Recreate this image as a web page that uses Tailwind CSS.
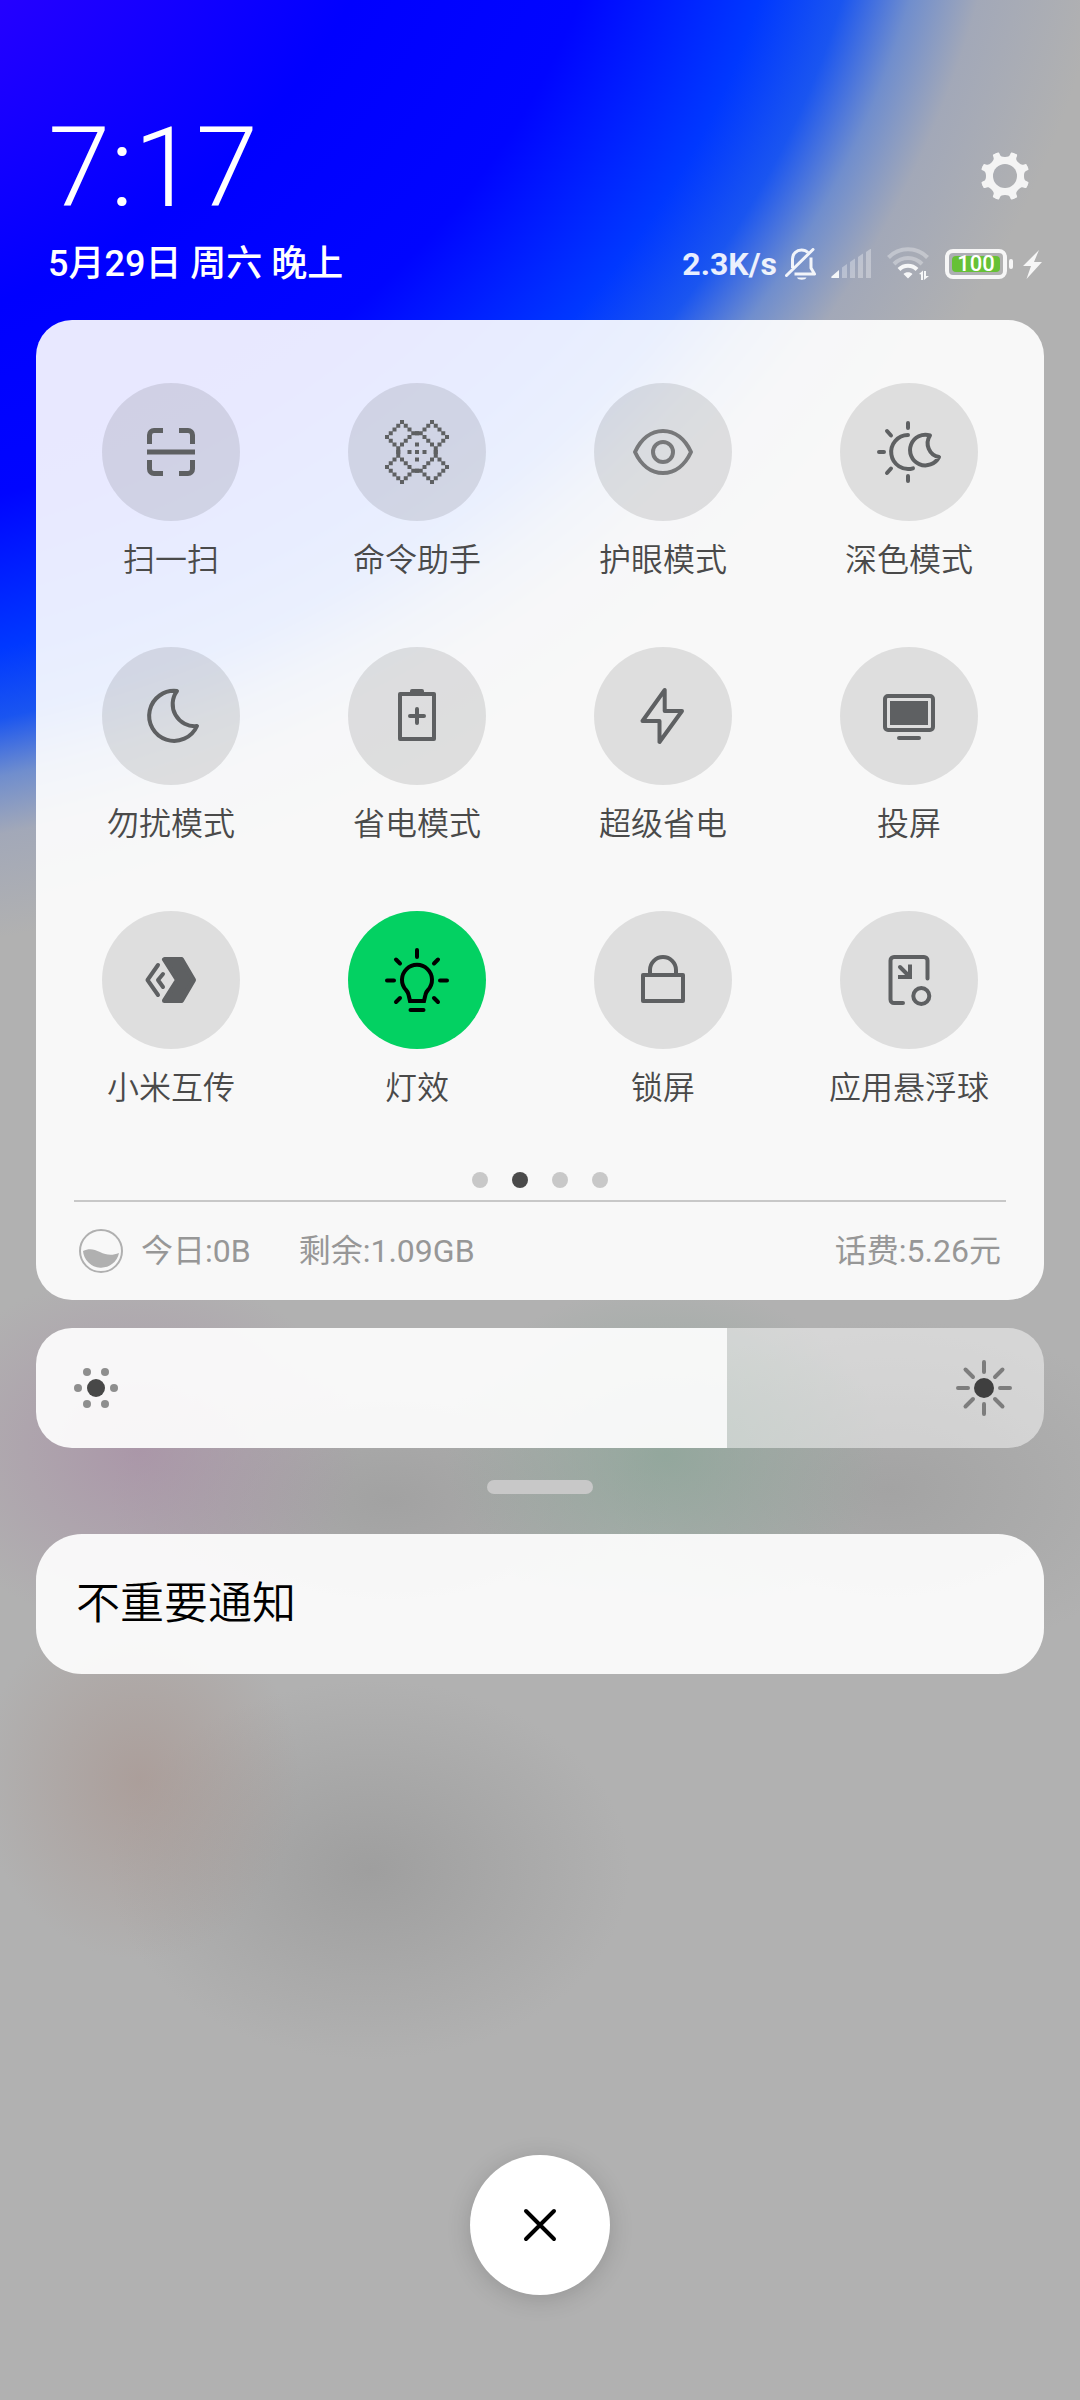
<!DOCTYPE html>
<html lang="zh-CN">
<head>
<meta charset="utf-8">
<meta name="viewport" content="width=device-width, initial-scale=1">
<title>控制中心</title>
<script src="https://cdn.jsdelivr.net/npm/@tailwindcss/browser@4"></script>
</head>
<body class="font-[Roboto,'Noto_Sans_CJK_SC',sans-serif]">
<div class="flex min-h-screen flex-col bg-[#b1b1b1] bg-[radial-gradient(1325px_1125px_at_-300px_-250px,#3a00f4_24%,#2400ff_32%,#0000ff_54%,#0005ff_70%,#0038ff_83%,#1a55f0_89%,rgba(90,130,215,0.75)_94%,rgba(140,155,195,0.4)_99%,rgba(176,176,176,0)_108%),radial-gradient(220px_180px_at_140px_1450px,rgba(168,140,165,0.7),rgba(168,140,165,0)),radial-gradient(220px_170px_at_665px_1455px,rgba(140,165,152,0.8),rgba(140,165,152,0)),radial-gradient(160px_180px_at_140px_1780px,rgba(168,148,142,0.65),rgba(168,148,142,0)),radial-gradient(260px_190px_at_370px_1870px,rgba(154,154,154,0.8),rgba(154,154,154,0)),radial-gradient(280px_150px_at_390px_1500px,rgba(158,158,158,0.8),rgba(158,158,158,0)),radial-gradient(280px_170px_at_890px_1490px,rgba(160,160,160,0.8),rgba(160,160,160,0))] bg-no-repeat pb-[105px]">

  <header class="pt-[108px] text-white">
    <div class="flex items-center justify-between pr-[51px] pl-12">
      <time class="text-[112px] leading-[120px] font-light">7:17</time>
      <button type="button" aria-label="设置" class="pt-4">
        <svg class="size-12" viewBox="-24 -24 48 48" aria-hidden="true">
          <defs>
            <path id="notch" d="M-7-26-6.400-23.500C-4.500-22-6-19 0-19S4.500-22 6.400-23.500L7-26z"/>
            <mask id="gear" maskUnits="userSpaceOnUse" x="-26" y="-26" width="52" height="52">
              <circle r="25" fill="#fff"/><circle r="12" fill="#000"/>
              <use href="#notch"/><use href="#notch" transform="rotate(45)"/><use href="#notch" transform="rotate(90)"/><use href="#notch" transform="rotate(135)"/><use href="#notch" transform="rotate(180)"/><use href="#notch" transform="rotate(225)"/><use href="#notch" transform="rotate(270)"/><use href="#notch" transform="rotate(315)"/>
            </mask>
          </defs>
          <circle r="24.500" fill="#f4f4f4" mask="url(#gear)"/>
        </svg>
      </button>
    </div>
    <div class="mt-3 flex h-12 items-center justify-between pr-[38px] pl-12">
      <p class="text-[36px] leading-12 font-medium">5月29日 周六 晚上</p>
      <div class="flex items-center text-white/90">
        <span class="text-[32px] leading-12 font-bold">2.3K/s</span>
        <svg class="ml-2 h-8 w-8" viewBox="0 0 32 32" fill="none" stroke="currentColor" stroke-width="3" role="img" aria-label="静音">
          <path d="M23 4.500C21 2.500 18.500 2 16.500 2 11.500 2 7.500 6 7.500 11v9M26 9.500V20l3.500 6H9.500" stroke-linejoin="round"/>
          <path d="M1.500 27.500 28 1.500" stroke-linecap="round"/><path d="M12 29.500h9.500c-1 3-8.500 3-9.500 0z" fill="currentColor" stroke="none"/>
        </svg>
        <svg class="ml-[14px] h-[30px] w-10" viewBox="0 0 40 30" fill="currentColor" role="img" aria-label="信号">
          <path d="M8 21v8H1c-1 0-1-1-.5-1.500z"/>
          <path opacity=".35" d="M11 18.500l5-3.500v14h-5zM19 13l5-3.500V29h-5zM27 8l5-3.500V29h-5zM35 3l5-3.500V29h-5z"/>
        </svg>
        <svg class="ml-4 h-[34px] w-[42px]" viewBox="0 0 42 34" role="img" aria-label="无线网络">
          <g fill="none" stroke="currentColor" stroke-width="4"><path opacity=".35" d="M1.500 10.500C12-.5 30-.5 40.500 10.500M7 17C15 9 27 9 35 17"/><path d="M12 22.500c5-5 13-5 18 0"/></g>
          <path fill="currentColor" d="M21 31.500l-4.500-4.500c2-2.500 7-2.500 9 0zM32 27l4-3.500V33h-2v-5.500zM37 24h2v5h3l-5 4z"/>
        </svg>
        <div class="ml-4 flex items-center">
          <div class="flex h-[30px] w-[62px] items-center rounded-lg border-4 border-[#f6f6f6] p-[3px]">
            <span class="flex h-4 flex-1 items-center justify-center rounded-sm bg-[#66c136] text-[22px] leading-4 font-medium text-white">100</span>
          </div>
          <span class="ml-[2px] h-[10px] w-1 rounded-sm bg-[#f6f6f6]"></span>
        </div>
        <svg class="ml-[10px] h-[30px] w-[19px]" viewBox="0 0 19 30" fill="#f6f6f6" role="img" aria-label="充电中"><path d="M16 1 0 17h8L3.500 30 19 13h-8z"/></svg>
      </div>
    </div>
  </header>

  <main class="mt-8 flex flex-1 flex-col px-9">
    <section class="rounded-[36px] bg-white/91 pt-[63px]" aria-label="快捷开关">
      <div class="grid grid-cols-4 gap-y-[63px] px-3 text-[32px] leading-12 font-[350] text-[#4a4a4a]">
        <button type="button" class="flex flex-col items-center gap-[15px]">
          <span class="flex size-[138px] items-center justify-center rounded-full bg-black/10"><svg class="size-[72px]" viewBox="0 0 72 72" fill="none" stroke="#5e6062" stroke-width="5" aria-hidden="true"><path d="M28 14.500H19A4.500 4.500 0 0 0 14.500 19V28M44 14.500h9a4.500 4.500 0 0 1 4.500 4.500V28M28 57.500H19a4.500 4.500 0 0 1-4.500-4.500V44M44 57.500h9a4.500 4.500 0 0 0 4.500-4.500V44M12 36h48"/></svg></span>
          <span>扫一扫</span>
        </button>
        <button type="button" class="flex flex-col items-center gap-[15px]">
          <span class="flex size-[138px] items-center justify-center rounded-full bg-black/10"><svg class="size-[72px]" viewBox="-9.600 -9.600 19.200 19.200" fill="none" stroke="#5e6062" stroke-width="1.070" stroke-linecap="square" aria-hidden="true">
            <defs><path id="arm" d="M-4-8h0M-5-7h0M-6-6h0M-7-5h0M-8-4h0M-3-7h0M-2-6h0M-7-3h0M-6-2h0M-2-4h0M-3-3h0M-4-2h0M-1-5H0M-5-1V0"/></defs>
            <use href="#arm"/><use href="#arm" transform="scale(-1 1)"/><use href="#arm" transform="scale(1 -1)"/><use href="#arm" transform="scale(-1 -1)"/>
            <path d="M0 0h0M-2 0h0M2 0h0M0-2h0M0 2h0"/></svg></span>
          <span>命令助手</span>
        </button>
        <button type="button" class="flex flex-col items-center gap-[15px]">
          <span class="flex size-[138px] items-center justify-center rounded-full bg-black/10"><svg class="size-[72px]" viewBox="0 0 72 72" fill="none" stroke="#77787a" stroke-width="4" stroke-linejoin="round" aria-hidden="true"><path d="M8 36C14 23 24 15 36 15S58 23 64 36C58 49 48 57 36 57S14 49 8 36z"/><circle cx="36" cy="36" r="10"/></svg></span>
          <span>护眼模式</span>
        </button>
        <button type="button" class="flex flex-col items-center gap-[15px]">
          <span class="flex size-[138px] items-center justify-center rounded-full bg-black/10"><svg class="size-[72px]" viewBox="0 0 72 72" fill="none" stroke="#5e6062" stroke-width="4" stroke-linecap="round" stroke-linejoin="round" aria-hidden="true"><path d="M35 19a17 17 0 1 0 5 33.300M57 19.500A15.300 15.300 0 1 0 66 41 14 14 0 0 1 57 19.500zM35 7v5M35 60v5M6 36h5M14 15l4 4.500M14 57l4-4.500"/></svg></span>
          <span>深色模式</span>
        </button>
        <button type="button" class="flex flex-col items-center gap-[15px]">
          <span class="flex size-[138px] items-center justify-center rounded-full bg-black/10"><svg class="size-[72px]" viewBox="0 0 72 72" fill="none" stroke="#5e6062" stroke-width="4" stroke-linejoin="round" aria-hidden="true"><path d="M42 11A25 25 0 1 0 62 46 22 22 0 0 1 42 11z"/></svg></span>
          <span>勿扰模式</span>
        </button>
        <button type="button" class="flex flex-col items-center gap-[15px]">
          <span class="flex size-[138px] items-center justify-center rounded-full bg-black/10"><svg class="size-[72px]" viewBox="0 0 72 72" fill="none" stroke="#5e6062" stroke-width="4" stroke-linecap="round" stroke-linejoin="round" aria-hidden="true"><path d="M19 14h34v45H19zM31 11h10v2H31zM29 36h14M36 29v14"/></svg></span>
          <span>省电模式</span>
        </button>
        <button type="button" class="flex flex-col items-center gap-[15px]">
          <span class="flex size-[138px] items-center justify-center rounded-full bg-black/10"><svg class="size-[72px]" viewBox="0 0 72 72" fill="none" stroke="#5e6062" stroke-width="4" stroke-linejoin="round" aria-hidden="true"><path d="M37.700 10v21H55L32.500 62V41H15.500z"/></svg></span>
          <span>超级省电</span>
        </button>
        <button type="button" class="flex flex-col items-center gap-[15px]">
          <span class="flex size-[138px] items-center justify-center rounded-full bg-black/10"><svg class="size-[72px]" viewBox="0 0 72 72" fill="none" stroke="#5e6062" stroke-width="4" stroke-linecap="round" aria-hidden="true"><rect x="12" y="16" width="48" height="34" rx="3"/><path d="M17 21h38v24H17z" fill="#5e6062" stroke="none"/><path d="M26 58h20"/></svg></span>
          <span>投屏</span>
        </button>
        <button type="button" class="flex flex-col items-center gap-[15px]">
          <span class="flex size-[138px] items-center justify-center rounded-full bg-black/10"><svg class="size-[72px]" viewBox="0 0 72 72" fill="none" stroke="#5e6062" stroke-width="4" stroke-linecap="round" stroke-linejoin="round" aria-hidden="true"><path d="M29.500 15.500H46.500L58.500 36 46.500 56.500H29.500L42.500 36z" fill="#5e6062" stroke-width="5"/><path d="M23 21 12.500 36 23 51M28 30l-5 6 5 7"/></svg></span>
          <span>小米互传</span>
        </button>
        <button type="button" aria-pressed="true" class="flex flex-col items-center gap-[15px]">
          <span class="flex size-[138px] items-center justify-center rounded-full bg-[#03d162]"><svg class="size-[72px]" viewBox="0 0 72 72" fill="none" stroke="#000" stroke-width="4" stroke-linecap="round" aria-hidden="true"><path d="M29 57 27.500 50.500Q27 48 25 46A15 15 0 1 1 47 46Q45 48 44.500 50.500L43 57zM29.500 66h13M36 6v7M6 36.500h7M59 36.500h7M15 15.500l4 4M57 15.500l-4 4M15 58l4-4M57 58l-4-4"/></svg></span>
          <span>灯效</span>
        </button>
        <button type="button" class="flex flex-col items-center gap-[15px]">
          <span class="flex size-[138px] items-center justify-center rounded-full bg-black/10"><svg class="size-[72px]" viewBox="0 0 72 72" fill="none" stroke="#5e6062" stroke-width="4" stroke-linejoin="round" aria-hidden="true"><path d="M16 31h40v26H16zM23 31V26a13 13 0 0 1 26 0v5"/></svg></span>
          <span>锁屏</span>
        </button>
        <button type="button" class="flex flex-col items-center gap-[15px]">
          <span class="flex size-[138px] items-center justify-center rounded-full bg-black/10"><svg class="size-[72px]" viewBox="0 0 72 72" fill="none" stroke="#5e6062" stroke-width="4" stroke-linecap="round" aria-hidden="true"><path d="M54.500 34.500V16.500a3.500 3.500 0 0 0-3.500-3.500H21a3.500 3.500 0 0 0-3.500 3.500v39a3.500 3.500 0 0 0 3.500 3.500h9M27 23l9 9"/><path d="M37 20.500V33H25" stroke-linecap="butt"/><circle cx="48.300" cy="52" r="8"/></svg></span>
          <span>应用悬浮球</span>
        </button>
      </div>

      <div class="mt-15 flex justify-center gap-6">
        <button type="button" aria-label="第1页" class="size-4 rounded-full bg-[#c8c8c8]"></button>
        <button type="button" aria-label="第2页" aria-current="true" class="size-4 rounded-full bg-[#4a4a4a]"></button>
        <button type="button" aria-label="第3页" class="size-4 rounded-full bg-[#c8c8c8]"></button>
        <button type="button" aria-label="第4页" class="size-4 rounded-full bg-[#c8c8c8]"></button>
      </div>

      <div class="mx-[38px] mt-3 flex h-[100px] items-center border-t-2 border-[#c8c8c8] px-[5px] text-[32px] leading-12 text-[#979797]">
        <svg class="mr-[18px] size-11" viewBox="0 0 44 44" aria-hidden="true"><circle cx="22" cy="22" r="21" fill="none" stroke="#b0b0b0" stroke-width="2"/><path d="M4 22c6-3 11-2 17 1s12 4 19 1A18.200 18.200 0 0 1 4 22z" fill="#b0b0b0"/></svg>
        <span>今日:0B</span>
        <span class="ml-12">剩余:1.09GB</span>
        <span class="ml-auto">话费:5.26元</span>
      </div>
    </section>

    <div class="relative mt-7 flex h-[120px] overflow-hidden rounded-[36px]">
      <div class="bg-white/91" style="width:68.55%"></div>
      <div class="flex-1 bg-white/48"></div>
      <input type="range" min="0" max="100" value="69" aria-label="亮度" class="absolute inset-0 size-full opacity-0">
      <div class="pointer-events-none absolute inset-0 flex items-center justify-between px-8">
        <svg class="size-14" viewBox="-28 -28 56 56" aria-hidden="true"><circle r="9" fill="#484848"/><g fill="#8e8e8e"><circle cx="-18" r="4"/><circle cx="18" r="4"/><circle cx="-9" cy="-16" r="4"/><circle cx="9" cy="-16" r="4"/><circle cx="-9" cy="16" r="4"/><circle cx="9" cy="16" r="4"/></g></svg>
        <svg class="size-14" viewBox="-28 -28 56 56" aria-hidden="true"><circle r="10" fill="#3f3f3f"/><path d="M0-26v10M0 26V16M-26 0h10M26 0H16M-18.500-18.500l7.500 7.500M18.500-18.500l-7.500 7.500M-18.500 18.500l7.500-7.500M18.500 18.500l-7.500-7.500" stroke="#7d7d7d" stroke-width="4" stroke-linecap="round"/></svg>
      </div>
    </div>

    <div class="mx-auto mt-8 h-[14px] w-[106px] rounded-full bg-[#c8c8c8]"></div>

    <section class="mt-10 flex h-[140px] items-center rounded-[46px] bg-white/91 px-10">
      <h2 class="text-[44px] leading-[64px] font-[350] text-black">不重要通知</h2>
    </section>

    <button type="button" aria-label="清除通知" class="mx-auto mt-auto flex size-[140px] items-center justify-center rounded-full bg-white shadow-[0_4px_24px_rgba(0,0,0,0.16)]">
      <svg class="size-9" viewBox="-18 -18 36 36" stroke="#000" stroke-width="4" stroke-linecap="round" aria-hidden="true"><path d="M-14-14 14 14M14-14-14 14"/></svg>
    </button>
  </main>
</div>
</body>
</html>
